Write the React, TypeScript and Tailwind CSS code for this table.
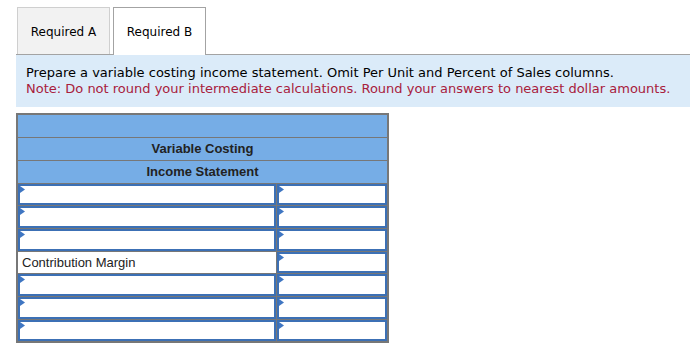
import React from 'react';

const rows = ['', '', '', 'Contribution Margin', '', '', ''];

const Marker = () => (
  <svg width="5" height="7" viewBox="0 0 5 7" className="absolute left-0 top-0">
    <polygon points="0,0 5,3.5 0,7" fill="#3f76c2" />
  </svg>
);

const InputCell: React.FC = () => (
  <div className="relative h-full w-full border-2 border-[#3c70b5] bg-white">
    <Marker />
  </div>
);

const App: React.FC = () => {
  return (
    <div className="w-[690px] h-[348px] bg-white pl-[16px] pt-[7px]" style={{ fontFamily: '"DejaVu Sans", Verdana, sans-serif' }}>
      <div className="flex items-end border-b border-[#a3a3a3] pl-[1px] gap-[3px]">
        <div className="w-[93px] h-[47px] flex items-center justify-center pt-[1px] bg-[#f2f2f2] border border-b-0 border-[#cfcfcf] text-[12px] text-black">
          Required A
        </div>
        <div className="w-[93px] h-[48px] -mb-[1px] flex items-center justify-center bg-white border border-b-0 border-[#a3a3a3] text-[12px] text-black">
          Required B
        </div>
      </div>
      <div className="h-[52px] bg-[#dbebf9] pl-[10px] pt-[10px] text-[13px] leading-[16px]">
        <div className="text-black">Prepare a variable costing income statement. Omit Per Unit and Percent of Sales columns.</div>
        <div className="text-[#a8203c]">Note: Do not round your intermediate calculations. Round your answers to nearest dollar amounts.</div>
      </div>
      <table
        className="mt-[6px] w-[373px] border-collapse border-2 border-[#777] text-[13px] text-[#222]"
        style={{ fontFamily: '"Liberation Sans", Arial, sans-serif' }}
      >
        <tbody>
          <tr className="h-[23px] bg-[#76ade6]">
            <td colSpan={2} className="border border-[#777]" />
          </tr>
          <tr className="h-[23px] bg-[#76ade6]">
            <td colSpan={2} className="border border-[#777] text-center font-bold">Variable Costing</td>
          </tr>
          <tr className="h-[23px] bg-[#76ade6]">
            <td colSpan={2} className="border border-[#777] text-center font-bold">Income Statement</td>
          </tr>
          {rows.map((label, i) => (
            <tr key={i} className="h-[22.7px]">
              <td className="w-[259px] h-[22.7px] p-0 border border-[#777]">
                {label ? <div className="pl-[4px] leading-[21px]">{label}</div> : <InputCell />}
              </td>
              <td className="h-[22.7px] p-0 border border-[#777]">
                <InputCell />
              </td>
            </tr>
          ))}
        </tbody>
      </table>
    </div>
  );
};

export default App;
